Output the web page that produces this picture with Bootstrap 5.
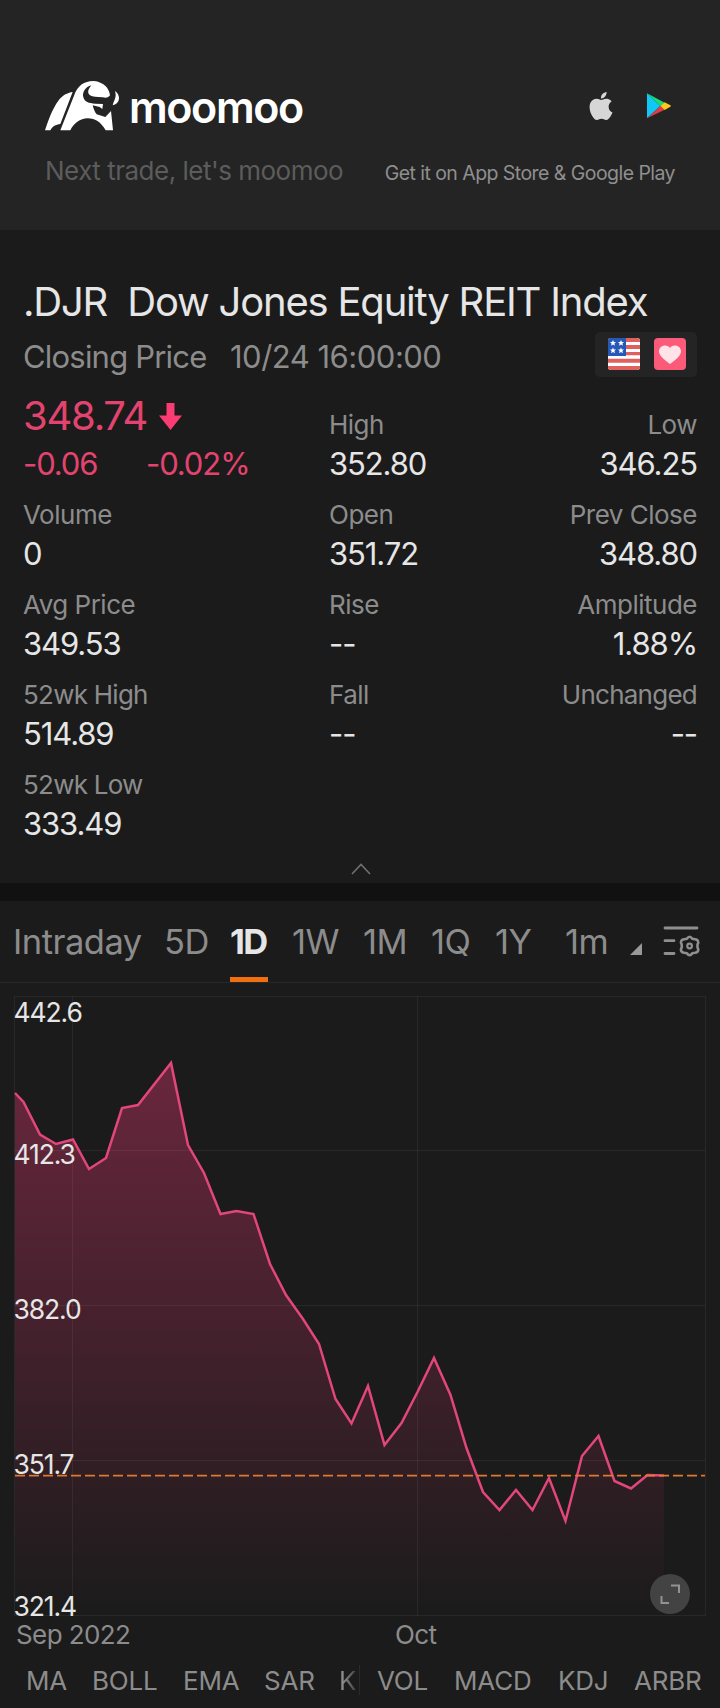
<!DOCTYPE html>
<html lang="en">
<head>
<meta charset="utf-8">
<meta name="viewport" content="width=device-width, initial-scale=1">
<title>.DJR Dow Jones Equity REIT Index</title>
<link href="https://cdn.jsdelivr.net/npm/bootstrap@5.3.0/dist/css/bootstrap.min.css" rel="stylesheet">
<style>
body{background:#1b1b1b;color:#e6e6e6;font-family:Inter,"Liberation Sans",sans-serif;width:720px;overflow-x:hidden}
svg{display:block;flex:none}
.brand-bar{background:#242424;height:230px;padding:80px 45px 0 45px}
.wordmark{font-size:43px;font-weight:600;line-height:52px;letter-spacing:-1.4px;color:#fff;margin-left:9px;padding-top:1px;height:52px}
.store-icons{gap:31px;padding:12px 4px 0 0}
.tagline{margin-top:23px}
.slogan{font-size:26px;line-height:32px;letter-spacing:-.5px;color:#5c5c5c}
.store-text{font-size:19.5px;letter-spacing:-.55px;color:#8f8f8f}
.quote{height:653px;padding:47px 23px 0 24px}
.quote h1{font-size:40px;font-weight:400;line-height:50px;letter-spacing:-1.2px;white-space:pre;margin:0 0 5px -1px}
.sub-line{font-size:31px;height:45px;color:#8c8c8c;white-space:nowrap}
.sub-line span{padding-top:6px}
.sub-line .state{width:207px;letter-spacing:-.8px;margin-left:-1px}
.sub-line .time{letter-spacing:-.5px}
.tags{background:#242424;border-radius:5px;width:102px;height:45px;padding:6px 11px 7px 13px}
.stats{display:grid;grid-template-columns:306px 1fr auto;row-gap:12px;margin-top:29px}
.stats dt{font-weight:400;font-size:26px;line-height:36px;letter-spacing:-.5px;color:#8c8c8c}
.stats dd{margin:0;font-size:31px;line-height:42px;letter-spacing:-1.1px}
.stats dl{margin:0 0 0 -1px;white-space:nowrap;position:relative;top:1px}
.stats .tight dt{letter-spacing:-.75px}
.last-price{font-size:40px;line-height:48px;letter-spacing:-1.25px;margin:-15px 0 3px}
.last-price svg{margin:1px 0 0 12px}
.down{color:#e3446f}
.band{height:18px;background:#111}
.periods{display:grid;grid-template-columns:151px 66px 62px 71px 68px 64px 70px 65px 33px auto;height:82px;padding-left:13px;border-bottom:1px solid #272727;font-size:34.5px;line-height:82px;letter-spacing:-.5px;color:#8c8c8c}
.periods .active{color:#e6e6e6;font-weight:700;position:relative;letter-spacing:-1.6px}
.periods .active::after{content:"";position:absolute;left:0;bottom:0;width:38px;height:5px;background:#f0700f}
.periods span{height:81px}
.chart text{font-size:26.5px;letter-spacing:-1.1px;fill:#e6e6e6}
.axis{font-size:26px;line-height:32px;letter-spacing:-.6px;color:#8c8c8c;padding-left:16px}
.axis span:first-child{width:379px}
.indicators{display:grid;grid-template-columns:66px 91px 81px 75px 20px 18px 77px 104px 76px auto;font-size:26px;line-height:32px;letter-spacing:-.2px;color:#8c8c8c;padding-left:26px;margin-top:14px}
.indicators .cut{background:linear-gradient(90deg,#8c8c8c 20%,#3c3c3c 90%);-webkit-background-clip:text;background-clip:text;color:transparent}
.indicators .rule{border-left:1px solid #2a2a2a;height:30px}
</style>
</head>
<body>
<header class="brand-bar">
  <div class="d-flex justify-content-between">
    <div class="d-flex">
      <svg width="75" height="51.7" viewBox="135 60 225 155" fill="#fff"><path d="M135 211C145 180 158 145 175 122C187 106 202 98 218 96L181 192C166 194 159 198 151 211Z"/><path d="M181 211L222 107C232 76 255 62 282 63C310 66 328 84 330 106C326 113 318 114 308 112C290 111 278 111 270 106C261 99 264 88 274 76C256 80 246 98 250 112C254 126 266 130 286 131L309 132L307 147L299 141L278 136C281 147 284 157 290 163L316 171L333 153L339 211H317C304 188 286 175 263 175C240 175 221 190 211 211Z"/><path d="M345 93C363 105 361 131 338 136C342 119 351 113 345 93Z"/></svg>
      <span class="wordmark">moomoo</span>
    </div>
    <div class="d-flex store-icons">
      <svg width="28" height="28" viewBox="0 0 24 24" fill="#d6d6d6"><path d="M12.152 6.896c-.948 0-2.415-1.078-3.96-1.04-2.04.027-3.91 1.183-4.961 3.014-2.117 3.675-.546 9.103 1.519 12.09 1.013 1.454 2.208 3.09 3.792 3.039 1.52-.065 2.09-.987 3.935-.987 1.831 0 2.35.987 3.96.948 1.637-.026 2.676-1.48 3.676-2.948 1.156-1.688 1.636-3.325 1.662-3.415-.039-.013-3.182-1.221-3.22-4.857-.026-3.04 2.48-4.494 2.597-4.559-1.429-2.09-3.623-2.324-4.39-2.376-2-.156-3.675 1.09-4.61 1.09zM15.53 3.83c.843-1.012 1.4-2.427 1.245-3.83-1.207.052-2.662.805-3.532 1.818-.78.896-1.454 2.338-1.273 3.714 1.338.104 2.715-.688 3.559-1.701"/></svg>
      <svg width="25" height="28" viewBox="0 0 75 84"><path d="M3 4V79L43 42Z" fill="#10c8f5"/><path d="M3 4L56 32L43 42Z" fill="#16dc7c"/><path d="M3 79L56 53L43 42Z" fill="#dc3c4b"/><path d="M56 31L73 40Q76 42 73 44L56 54L43 42Z" fill="#fcc81c"/></svg>
    </div>
  </div>
  <div class="d-flex justify-content-between align-items-baseline tagline">
    <span class="slogan">Next trade, let's moomoo</span>
    <span class="store-text">Get it on App Store &amp; Google Play</span>
  </div>
</header>

<main>
<section class="quote">
  <h1>.DJR  Dow Jones Equity REIT Index</h1>
  <div class="d-flex align-items-center sub-line">
    <span class="state">Closing Price</span><span class="time">10/24 16:00:00</span>
    <div class="tags ms-auto d-flex justify-content-between">
      <svg width="32" height="32" viewBox="0 0 32 32"><defs><clipPath id="tile"><rect width="32" height="32" rx="3"/></clipPath></defs><g clip-path="url(#tile)"><rect width="32" height="32" fill="#fff"/><path d="M0 2H32M0 9H32M0 16H32M0 22.700H32M0 30H32" stroke="#e0605f" stroke-width="4"/><path d="M0 18.500H32" stroke="#fff" stroke-width="2.500"/><rect width="18" height="18" fill="#2658b8"/><g fill="#fff"><path id="st" d="M5 2l.9 1.900 2.100.2-1.600 1.500.5 2.100L5 6.600l-1.900 1.100.5-2.100L2 4.100l2.100-.2z"/><use href="#st" x="8"/><use href="#st" y="7.500"/><use href="#st" x="8" y="7.500"/></g></g></svg>
      <svg width="32" height="32" viewBox="0 0 32 32"><rect width="32" height="32" rx="4" fill="#fb5a78"/><path d="M16 26C13 23.500 5 18.500 5 13.500C5 7.500 12.500 5.500 16 10C19.500 5.500 27 7.500 27 13.500C27 18.500 19 23.500 16 26Z" fill="#ffe3e8"/></svg>
    </div>
  </div>
  <div class="stats">
    <dl class="down"><div class="last-price d-flex align-items-center">348.74<svg width="23" height="27" viewBox="0 0 23 27"><path d="M7.500 0H15.500V12.500H23L11.500 27L0 12.500H7.500Z" fill="#fb3b73"/></svg></div><dd class="d-flex"><span style="width:123px">-0.06</span><span>-0.02%</span></dd></dl>
    <dl><dt>High</dt><dd>352.80</dd></dl>
    <dl class="text-end"><dt>Low</dt><dd>346.25</dd></dl>
    <dl><dt>Volume</dt><dd>0</dd></dl>
    <dl><dt>Open</dt><dd>351.72</dd></dl>
    <dl class="text-end"><dt>Prev Close</dt><dd>348.80</dd></dl>
    <dl><dt>Avg Price</dt><dd>349.53</dd></dl>
    <dl><dt>Rise</dt><dd>--</dd></dl>
    <dl class="text-end"><dt>Amplitude</dt><dd>1.88%</dd></dl>
    <dl class="tight"><dt>52wk High</dt><dd>514.89</dd></dl>
    <dl><dt>Fall</dt><dd>--</dd></dl>
    <dl class="text-end tight"><dt>Unchanged</dt><dd>--</dd></dl>
    <dl class="tight"><dt>52wk Low</dt><dd>333.49</dd></dl>
  </div>
  <svg class="mx-auto" width="20" height="12" viewBox="0 0 20 12" style="margin-top:19px" fill="none" stroke="#707070" stroke-width="1.600"><path d="M1 11L10 1.500L19 11"/></svg>
</section>
<div class="band"></div>

<nav class="periods">
  <span>Intraday</span><span>5D</span><span class="active">1D</span><span>1W</span><span>1M</span><span>1Q</span><span>1Y</span><span>1m</span>
  <svg width="12" height="12" viewBox="0 0 12 12" style="margin-top:42px"><path d="M12 0V12H0Z" fill="#999"/></svg>
  <svg width="38" height="34" viewBox="0 0 38 34" style="margin-top:24px" fill="none" stroke="#8f8f8f" stroke-width="2.800" stroke-linecap="round"><path d="M2 3H34M2 15.700H11M2 28.500H11"/><circle cx="26.600" cy="21" r="2.300" stroke-width="2.200"/><path stroke-width="2.600" stroke-linejoin="round" d="M26.600 11.800Q28 11.800 29.200 13.700Q30 14.200 32 14.200Q34.700 14.400 35.200 16.700Q35.500 17.900 34.600 19.300Q34.200 21 34.600 22.700Q35.500 24.100 35.200 25.300Q34.700 27.600 32 27.800Q30 27.800 29.200 28.300Q28 30.200 26.600 30.200Q25.200 30.200 24 28.300Q23.200 27.800 21.200 27.800Q18.500 27.600 18 25.300Q17.700 24.100 18.600 22.700Q19 21 18.600 19.300Q17.700 17.900 18 16.700Q18.500 14.400 21.200 14.200Q23.200 14.200 24 13.700Q25.200 11.800 26.600 11.800Z"/></svg>
</nav>

<svg class="chart" width="720" height="636" viewBox="0 983 720 636">
  <defs><linearGradient id="fade" x1="0" y1="1062" x2="0" y2="1615" gradientUnits="userSpaceOnUse"><stop offset="0" stop-color="#f03a75" stop-opacity=".37"/><stop offset="1" stop-color="#f03a75" stop-opacity="0"/></linearGradient></defs>
  <path fill="url(#fade)" d="M15 1093L23.500 1102L40 1134.500L56 1144L73 1139L89 1169L106 1158L122 1108L138 1105L171 1062L188 1145L204 1173L220.500 1214L236.500 1211L253.500 1214L270 1264L286 1295L303 1319L319 1344L335.500 1399L351.500 1423.500L368 1386L384.500 1445L401.500 1423L417.500 1392L434 1358L450.500 1395L466.500 1448L483 1492L499.500 1510L516 1490L532.500 1510L549 1478L565.500 1521L582 1456L598.500 1436L614.500 1481L631 1488.500L647.500 1475L664 1475.500V1615H15Z"/>
  <path fill="none" stroke="#fff" stroke-opacity=".06" d="M14.500 996.500H705.500V1615.500H14.500ZM14.500 1150.500H705.500M14.500 1305.500H705.500M14.500 1460.500H705.500M72.500 996.500V1615.500M417.500 996.500V1615.500"/>
  <path fill="none" stroke="#e2467a" stroke-width="2.500" stroke-linejoin="miter" d="M15 1093L23.500 1102L40 1134.500L56 1144L73 1139.500L89 1169L106 1158L122 1108L138 1105L171 1063L188 1145L204 1173L220.500 1214L236.500 1211L253.500 1214L270 1264L286 1295L303 1319L319 1344L335.500 1399L351.500 1423.500L368 1386L384.500 1445L401.500 1423L417.500 1392L434 1358L450.500 1395L466.500 1448L483 1492L499.500 1510L516 1490L532.500 1510L549 1478L565.500 1521L582 1456L598.500 1436L614.500 1481L631 1488.500L647.500 1475L664 1475.500"/>
  <path stroke="#e0792f" stroke-width="1.700" stroke-dasharray="10 4" d="M15 1475.700H705"/>
  <text x="13.500" y="1021.500">442.6</text><text x="13.500" y="1163.500">412.3</text><text x="13.500" y="1318.500">382.0</text><text x="13.500" y="1473.500">351.7</text><text x="13.500" y="1616">321.4</text>
  <circle cx="670" cy="1594" r="20" fill="#434343"/><path fill="none" stroke="#929292" stroke-width="2" d="M671 1585.500H679V1593M661.500 1596V1603H669"/>
</svg>
<div class="axis d-flex"><span>Sep 2022</span><span>Oct</span></div>
<div class="indicators"><span>MA</span><span>BOLL</span><span>EMA</span><span>SAR</span><span class="cut">K</span><span class="rule"></span><span>VOL</span><span>MACD</span><span>KDJ</span><span>ARBR</span></div>
</main>
<script src="https://cdn.jsdelivr.net/npm/bootstrap@5.3.0/dist/js/bootstrap.bundle.min.js"></script>
</body>
</html>
